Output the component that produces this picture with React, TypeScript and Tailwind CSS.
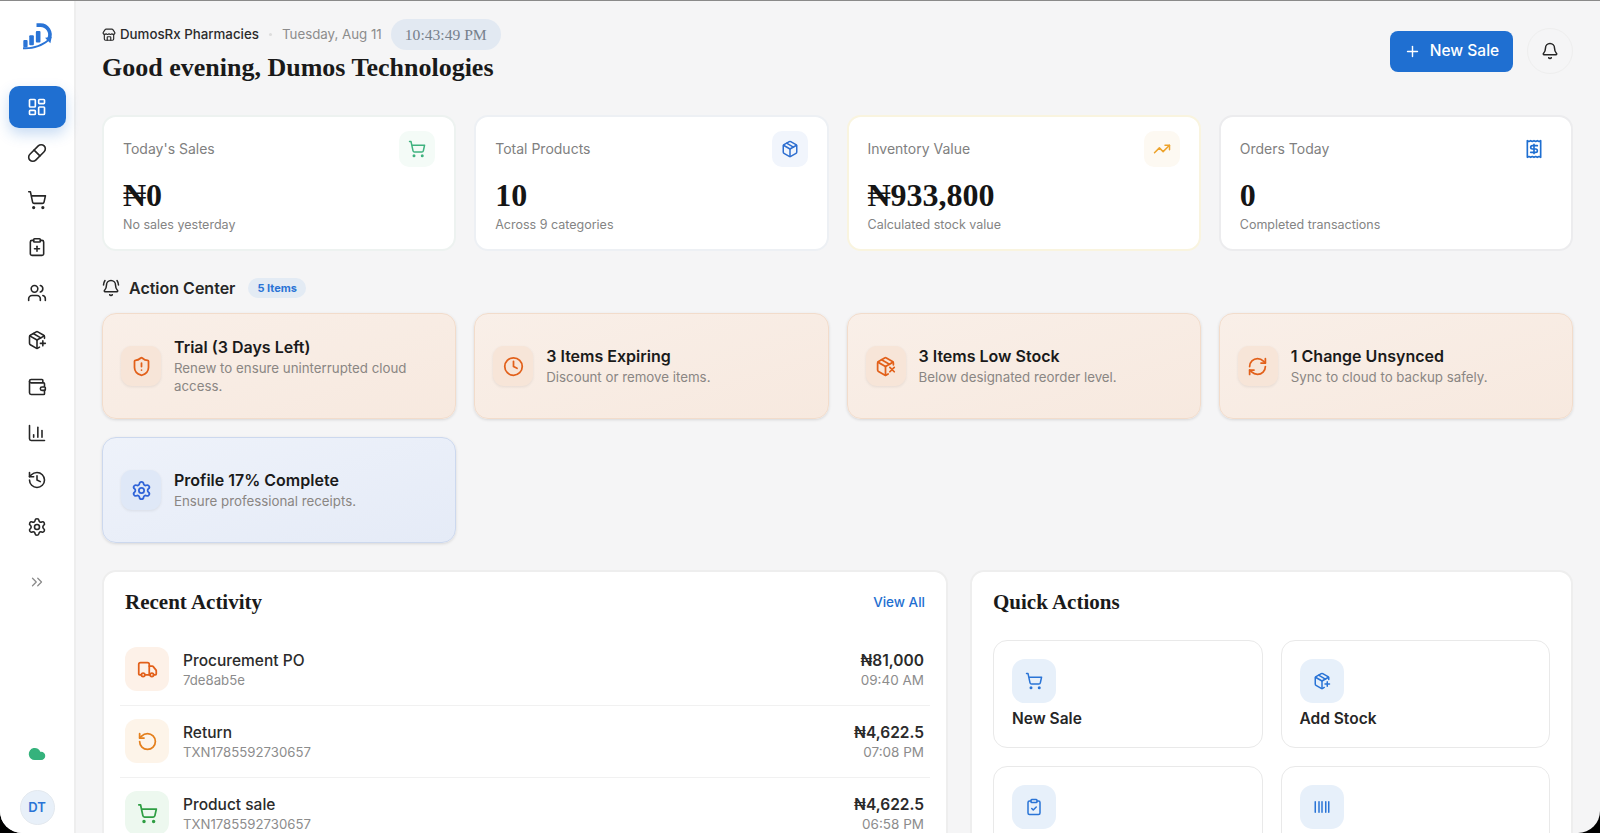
import {
  LayoutDashboard, Pill, ShoppingCart, ClipboardPlus, Users, PackagePlus, Wallet, ChartColumn, History, Settings,
  ChevronsRight, Cloud, Store, Plus, Bell, BellRing, Package, TrendingUp, Receipt, ShieldAlert, Clock, PackageX,
  RefreshCw, Truck, RotateCcw, ClipboardCheck, Barcode,
} from 'lucide-react';

const serif = "font-['Liberation_Serif',serif]";

const navItems = [Pill, ShoppingCart, ClipboardPlus, Users, PackagePlus, Wallet, ChartColumn, History, Settings];

const stats = [
  { label: "Today's Sales", value: '₦0', sub: 'No sales yesterday', Icon: ShoppingCart, tile: 'bg-[#f4fbf7]', color: 'text-[#3fb27f]', border: 'border-[#edf2f0]' },
  { label: 'Total Products', value: '10', sub: 'Across 9 categories', Icon: Package, tile: 'bg-[#f1f5fc]', color: 'text-[#2f6fd0]', border: 'border-[#edf0f4]' },
  { label: 'Inventory Value', value: '₦933,800', sub: 'Calculated stock value', Icon: TrendingUp, tile: 'bg-[#fdf9f2]', color: 'text-[#eda32c]', border: 'border-[#f9f4df]' },
  { label: 'Orders Today', value: '0', sub: 'Completed transactions', Icon: Receipt, tile: 'bg-white', color: 'text-[#1f6fd1]', border: 'border-[#ececee]' },
];

const alerts = [
  { title: 'Trial (3 Days Left)', text: 'Renew to ensure uninterrupted cloud access.', Icon: ShieldAlert },
  { title: '3 Items Expiring', text: 'Discount or remove items.', Icon: Clock },
  { title: '3 Items Low Stock', text: 'Below designated reorder level.', Icon: PackageX },
  { title: '1 Change Unsynced', text: 'Sync to cloud to backup safely.', Icon: RefreshCw },
];

const activity = [
  { name: 'Procurement PO', ref: '7de8ab5e', amount: '₦81,000', time: '09:40 AM', Icon: Truck, tile: 'bg-[#fdf1e8]', color: 'text-[#e2601a]' },
  { name: 'Return', ref: 'TXN1785592730657', amount: '₦4,622.5', time: '07:08 PM', Icon: RotateCcw, tile: 'bg-[#fdf4e9]', color: 'text-[#e47f1c]' },
  { name: 'Product sale', ref: 'TXN1785592730657', amount: '₦4,622.5', time: '06:58 PM', Icon: ShoppingCart, tile: 'bg-[#edf8ef]', color: 'text-[#2f9e44]' },
];

const quick = [
  { label: 'New Sale', Icon: ShoppingCart },
  { label: 'Add Stock', Icon: PackagePlus },
  { label: '', Icon: ClipboardCheck },
  { label: '', Icon: Barcode },
];

function AlertCard({ title, text, Icon, blue }: { title: string; text: string; Icon: typeof Clock; blue?: boolean }) {
  return (
    <div className={`flex h-[106px] items-center gap-[13px] rounded-[14px] border px-[18px] shadow-[0_1px_3px_rgba(0,0,0,0.12)] ${blue ? 'border-[#ccd8ee] bg-gradient-to-br from-[#eef2fa] to-[#e5ebf7]' : 'border-[#f2dccb] bg-gradient-to-br from-[#f9efe8] to-[#f7e9df]'}`}>
      <div className={`flex h-10 w-10 shrink-0 items-center justify-center rounded-[11px] shadow-[0_1px_3px_rgba(0,0,0,0.08)] ${blue ? 'bg-[#dfe8f7] text-[#2f63d8]' : 'bg-[#f7e5d8] text-[#e2601a]'}`}>
        <Icon size={21} strokeWidth={2} />
      </div>
      <div className="min-w-0">
        <div className="text-[16px] leading-[20px] font-semibold text-[#1a1a1a]">{title}</div>
        <div className="mt-[2px] text-[13.3px] leading-[18.5px] text-[#8a8683]">{text}</div>
      </div>
    </div>
  );
}

export default function App() {
  return (
    <div className="h-[833px] w-full overflow-hidden bg-black font-['Inter',sans-serif]">
      <div className="flex h-full overflow-hidden rounded-b-[22px] border-t border-[#8a8a8a] bg-[#f5f5f6]">
        <aside className="flex h-full w-[76px] shrink-0 flex-col items-center border-r-2 border-[#eeeeee] bg-white">
          <svg viewBox="60 65 100 90" className="mt-[20px] h-[30px] w-[33px]">
            <path d="M107 77h12a29 29 0 0 1 26 41" fill="none" stroke="#2a74d6" strokeWidth="11" />
            <rect x="67" y="122" width="13" height="22" rx="3" fill="#2a74d6" />
            <rect x="85" y="108" width="14" height="30" rx="3" fill="#2a74d6" />
            <rect x="105" y="95" width="14" height="35" rx="3" fill="#2a74d6" />
            <path d="M66 144C95 147 122 135 139 122L133 115L153 113L149 132L143 126C125 142 95 152 66 150Z" fill="#2a74d6" />
          </svg>
          <div className="mt-[35px] flex h-[42px] w-[57px] shrink-0 items-center justify-center rounded-[10px] bg-[#1f6fd1] text-white shadow-[0_6px_14px_rgba(31,111,209,0.25)]">
            <LayoutDashboard size={20} strokeWidth={2} />
          </div>
          <nav className="mt-[2px] flex flex-col items-center">
            {navItems.map((Icon, i) => (
              <div key={i} className="flex h-[46.7px] w-[57px] items-center justify-center text-[#262626]">
                <Icon size={20} strokeWidth={1.9} />
              </div>
            ))}
          </nav>
          <ChevronsRight size={18} strokeWidth={1.7} className="mt-[23px] text-[#8b8b8b]" />
          <Cloud size={18} className="mt-auto fill-[#35b27c] text-[#35b27c]" />
          <div className="mt-[27px] mb-[8px] flex h-[35px] w-[35px] items-center justify-center rounded-full border border-[#e3e8ee] bg-[#e8f0f9] text-[13px] font-semibold text-[#2a74d6]">DT</div>
        </aside>

        <main className="min-w-0 flex-1 pt-[18px] pr-[27px] pl-[26px]">
          <header className="flex h-[80px] items-start justify-between">
            <div>
              <div className="flex h-[31px] items-center text-[13.3px] text-[#8c8c8c]">
                <Store size={14} className="mr-[4px] text-[#2b2b2b]" />
                <span className="font-medium text-[#2b2b2b]">DumosRx Pharmacies</span>
                <span className="mx-[10px] h-[3px] w-[3px] rounded-full bg-[#dddddd]" />
                <span>Tuesday, Aug 11</span>
                <span className={`ml-[9px] flex h-[31px] items-center rounded-full bg-[#e2e9f2] px-[14px] text-[15.6px] text-[#76808c] ${serif}`}>10:43:49 PM</span>
              </div>
              <h1 className={`mt-[2px] text-[26px] leading-[32px] font-bold text-[#1a1a1a] ${serif}`}>Good evening, Dumos Technologies</h1>
            </div>
            <div className="flex items-center gap-[14px] pt-[9px]">
              <button className="flex h-[41px] w-[123px] items-center justify-center gap-[9px] rounded-[8px] bg-[#1f6fd1] text-[15.5px] font-medium text-white">
                <Plus size={17} strokeWidth={2} />
                New Sale
              </button>
              <div className="flex h-[46px] w-[46px] items-center justify-center rounded-full border border-[#eeeeee]">
                <Bell size={18} className="text-[#262626]" />
              </div>
            </div>
          </header>

          <section className="mt-[16px] grid grid-cols-4 gap-[18px]">
            {stats.map(({ label, value, sub, Icon, tile, color, border }) => (
              <div key={label} className={`h-[136px] rounded-[14px] border-2 bg-white px-[19px] pt-[14px] ${border}`}>
                <div className="flex items-center justify-between">
                  <span className="-mt-[2px] text-[14px] text-[#808080]">{label}</span>
                  <div className={`flex h-[36px] w-[36px] items-center justify-center rounded-[10px] ${tile} ${color}`}>
                    <Icon size={label === 'Orders Today' ? 20 : 18} strokeWidth={2} />
                  </div>
                </div>
                <div className={`mt-[11px] text-[32px] leading-[34px] font-bold text-[#151515] ${serif}`}>{value}</div>
                <div className="mt-[4px] text-[12.5px] leading-[18px] text-[#848484]">{sub}</div>
              </div>
            ))}
          </section>

          <div className="mt-[26px] flex h-[22px] items-center">
            <BellRing size={18} className="text-[#262626]" />
            <span className="ml-[9px] text-[16px] font-semibold text-[#262626]">Action Center</span>
            <span className="ml-[13px] flex h-[20px] items-center rounded-full bg-[#e3ebf4] px-[9px] text-[11px] font-bold text-[#2a74d6]">5 Items</span>
          </div>

          <section className="mt-[14px] grid grid-cols-4 gap-[18px]">
            {alerts.map((a) => (
              <AlertCard key={a.title} {...a} />
            ))}
            <AlertCard title="Profile 17% Complete" text="Ensure professional receipts." Icon={Settings} blue />
          </section>

          <section className="mt-[27px] grid grid-cols-[846px_1fr] gap-[22px]">
            <div className="h-[300px] rounded-t-[14px] border-2 border-[#eeeeee] bg-white px-[21px] pt-[17px]">
              <div className="flex items-center justify-between">
                <h2 className={`text-[21px] leading-[26px] font-bold text-[#1a1a1a] ${serif}`}>Recent Activity</h2>
                <a className="text-[13.5px] font-medium text-[#1f6fd1]">View All</a>
              </div>
              <div className="mt-[19px] -mx-[5px]">
                {activity.map(({ name, ref, amount, time, Icon, tile, color }, i) => (
                  <div key={i} className="flex h-[72px] items-center border-b border-[#f1f1f1] pr-[6px] pb-[1px] pl-[5px]">
                    <div className={`flex h-[44px] w-[44px] shrink-0 items-center justify-center rounded-[12px] ${tile} ${color}`}>
                      <Icon size={21} strokeWidth={2} />
                    </div>
                    <div className="ml-[14px] flex-1">
                      <div className="text-[15.5px] leading-[21px] font-medium text-[#2b2b2b]">{name}</div>
                      <div className="text-[13.2px] leading-[18px] text-[#8c8c8c]">{ref}</div>
                    </div>
                    <div className="text-right">
                      <div className="text-[15.5px] leading-[21px] font-semibold text-[#2b2b2b]">{amount}</div>
                      <div className="text-[13.5px] leading-[18px] text-[#8c8c8c]">{time}</div>
                    </div>
                  </div>
                ))}
              </div>
            </div>

            <div className="h-[300px] rounded-t-[14px] border-2 border-[#eeeeee] bg-white px-[21px] pt-[17px]">
              <h2 className={`text-[21px] leading-[26px] font-bold text-[#1a1a1a] ${serif}`}>Quick Actions</h2>
              <div className="mt-[25px] grid grid-cols-2 gap-x-[18px] gap-y-[18px]">
                {quick.map(({ label, Icon }, i) => (
                  <div key={i} className="h-[108px] rounded-[14px] border border-[#e9e9e9] px-[18px] pt-[18px]">
                    <div className="flex h-[44px] w-[44px] items-center justify-center rounded-[13px] bg-[#e7f0fa] text-[#2a74d6]">
                      <Icon size={18} strokeWidth={2} />
                    </div>
                    {label && <div className="mt-[6px] text-[15.5px] leading-[20px] font-semibold text-[#262626]">{label}</div>}
                  </div>
                ))}
              </div>
            </div>
          </section>
        </main>
      </div>
    </div>
  );
}
